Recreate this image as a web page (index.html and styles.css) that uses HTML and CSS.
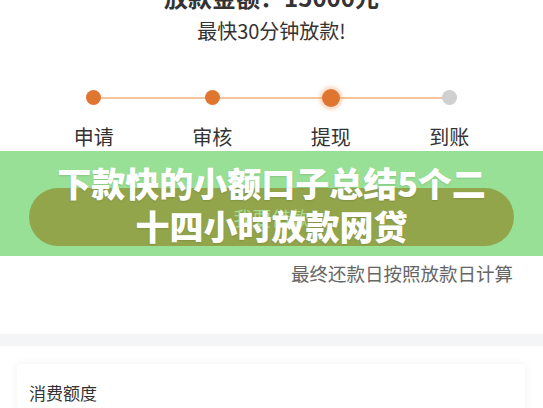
FILE: index.html
```html
<!DOCTYPE html>
<html lang="zh-CN">
  <head>
    <meta charset="UTF-8" />
    <meta name="viewport" content="width=device-width, initial-scale=1.0" />
    <title>下款快的小额口子</title>
    <link rel="stylesheet" href="styles.css">
  </head>
  <body>
    <div class="summary">
      <div class="amount">放款金额：15000元</div>
      <div class="speed">最快30分钟放款!</div>
    </div>

    <div class="steps">
      <div class="step">
        <span class="dot done"></span>
        <span class="step-name">申请</span>
      </div>
      <div class="step">
        <span class="dot done"></span>
        <span class="step-name">审核</span>
      </div>
      <div class="step">
        <span class="dot current"></span>
        <span class="step-name">提现</span>
      </div>
      <div class="step">
        <span class="dot"></span>
        <span class="step-name">到账</span>
      </div>
    </div>

    <div class="banner">
      <button class="apply-button">我要借款</button>
      <h1 class="banner-title">下款快的小额口子总结5个二十四小时放款网贷</h1>
    </div>

    <p class="note">最终还款日按照放款日计算</p>

    <div class="divider"></div>

    <div class="card">
      <div class="card-title">消费额度</div>
    </div>
  </body>
</html>
```

FILE: styles.css
```css
body {
  font-family: "Noto Sans CJK SC", "Noto Sans", sans-serif;
  margin: 0;
  background-color: #fff;
  color: #333;
  overflow: hidden;
}
.summary {
  text-align: center;
}
.amount {
  font-size: 24px;
  font-weight: 700;
  line-height: 29px;
  margin-top: -18px;
}
.speed {
  font-size: 20px;
  line-height: 28px;
  margin-top: 6px;
}
.steps {
  position: relative;
  width: 474px;
  margin: 41px auto 0;
  display: grid;
  grid-template-columns: repeat(4, 1fr);
}
/* connecting line between first and last dot */
.steps::before {
  content: "";
  position: absolute;
  left: 59px;
  right: 59px;
  top: 11px;
  height: 2px;
  background-color: #f5c49a;
}
.step {
  display: flex;
  flex-direction: column;
  align-items: center;
}
.dot {
  position: relative;
  width: 15px;
  height: 15px;
  margin: 4px 0 5px;
  border-radius: 50%;
  background-color: #d0d0d0;
}
.dot.done {
  background-color: #e0752f;
}
.dot.current {
  width: 18px;
  height: 18px;
  margin: 3px 0;
  background-color: #e0752f;
  box-shadow: 0 0 3px 3px rgba(240, 150, 90, 0.3);
}
.step-name {
  font-size: 20px;
  line-height: 27px;
  margin-top: 13px;
}
.banner {
  position: relative;
  margin-top: 1px;
  background-color: #98e095;
  padding: 37px 29px 10px;
}
.apply-button {
  display: block;
  width: 100%;
  height: 58px;
  border: none;
  border-radius: 29px;
  background-color: #93a54b;
  color: #a6dc92;
  font-family: inherit;
  font-size: 19px;
}
.banner-title {
  position: absolute;
  top: 10px;
  left: 0;
  right: 0;
  width: 440px;
  margin: 0 auto;
  color: #fff;
  font-size: 34px;
  font-weight: 900;
  line-height: 43px;
  text-align: center;
  text-shadow: 0 1px 2px rgba(0, 0, 0, 0.12);
}
.note {
  margin: 4px 30px 0 0;
  font-size: 18.5px;
  line-height: 26px;
  color: #666;
  text-align: right;
}
.divider {
  height: 12px;
  margin-top: 48px;
  background-color: #f4f5f7;
}
.card {
  margin: 18px 18px 0 17px;
  padding: 17px 12px;
  background-color: #fff;
  border-radius: 4px;
  box-shadow: 0 0 10px rgba(0, 0, 0, 0.06);
}
.card-title {
  font-size: 17px;
  line-height: 24px;
}
```
